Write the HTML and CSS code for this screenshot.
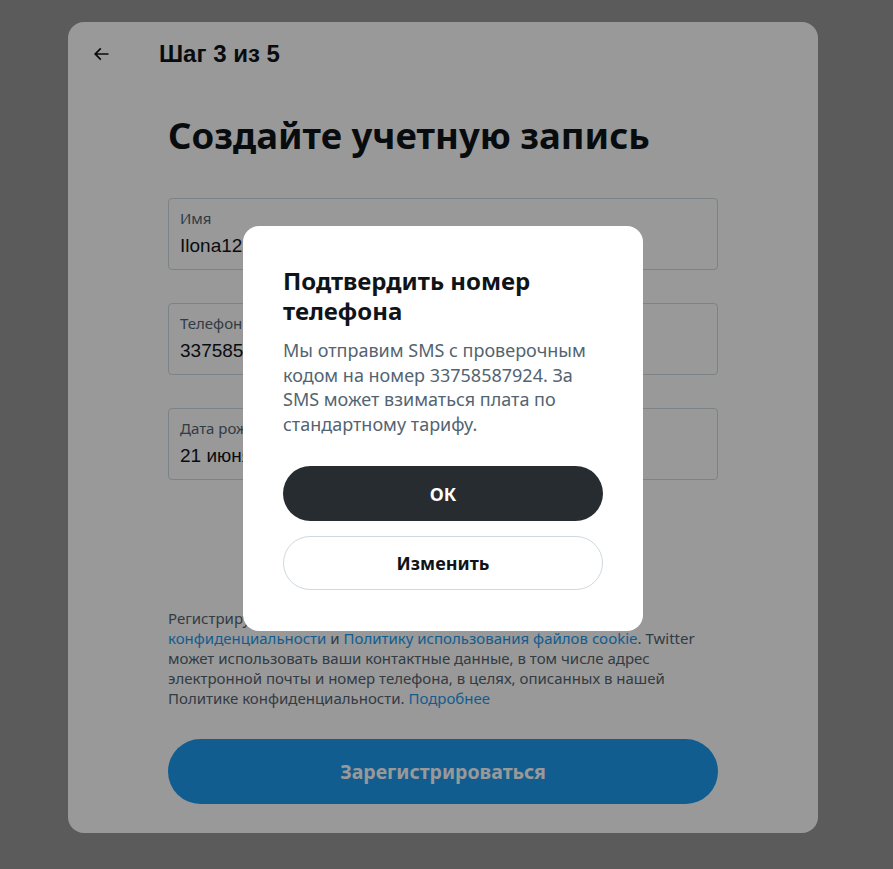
FILE: index.html
```html
<!DOCTYPE html>
<html lang="ru">
<head>
  <meta charset="UTF-8">
  <meta name="viewport" content="width=device-width, initial-scale=1.0">
  <title>Создайте учетную запись</title>
  <link rel="stylesheet" href="styles.css">
</head>
<body>
  <div class="page">
    <div class="card">
      <div class="card-head">
        <button class="back" aria-label="Назад">
          <svg viewBox="0 0 24 24" width="20" height="20"><path d="M7.414 13l5.043 5.04-1.414 1.42L3.586 12l7.457-7.46 1.414 1.42L7.414 11H21v2H7.414z"></path></svg>
        </button>
        <span class="step">Шаг 3 из 5</span>
      </div>

      <div class="card-body">
        <h1>Создайте учетную запись</h1>

        <div class="field">
          <span class="field-label">Имя</span>
          <span class="field-value">Ilona1234</span>
        </div>
        <div class="field">
          <span class="field-label">Телефон</span>
          <span class="field-value">33758587924</span>
        </div>
        <div class="field">
          <span class="field-label">Дата рождения</span>
          <span class="field-value">21 июня 1994 г.</span>
        </div>

        <p class="legal">
          Регистрируясь, вы принимаете <a href="#">Условия</a> и <a href="#">Политику</a><br>
          <a href="#">конфиденциальности</a> и <a href="#">Политику использования файлов cookie</a>. Twitter<br>
          может использовать ваши контактные данные, в том числе адрес<br>
          электронной почты и номер телефона, в целях, описанных в нашей<br>
          Политике конфиденциальности. <a href="#">Подробнее</a>
        </p>

        <button class="signup">Зарегистрироваться</button>
      </div>
    </div>
  </div>

  <div class="mask"></div>

  <div class="modal">
    <h2>Подтвердить номер телефона</h2>
    <p>Мы отправим SMS с проверочным кодом на номер 33758587924. За SMS может взиматься плата по стандартному тарифу.</p>
    <button class="btn btn-dark">ОК</button>
    <button class="btn btn-light">Изменить</button>
  </div>
</body>
</html>
```

FILE: styles.css
```css
body {
  margin: 0;
  background: #989898;
  font-family: "Noto Sans", "Open Sans", sans-serif;
  color: #0f1419;
}
.page {
  padding: 22px 0 36px 68px;
}
.card {
  width: 750px;
  height: 811px;
  background: #ffffff;
  border-radius: 16px;
  box-sizing: border-box;
}
.card-head {
  display: flex;
  align-items: center;
  height: 64px;
  padding: 0 16px;
}
.back {
  width: 34px;
  height: 34px;
  padding: 0;
  border: none;
  background: none;
  display: flex;
  align-items: center;
  justify-content: center;
}
.back svg { fill: #0f1419; }
.step {
  margin-left: 41px;
  font-family: "Liberation Sans", Arial, sans-serif;
  font-weight: bold;
  font-size: 24px;
}
.card-body {
  padding: 0 100px;
}
h1 {
  margin: 29px 0 43px;
  font-size: 36.5px;
  line-height: 40px;
  font-weight: bold;
}
.field {
  display: flex;
  flex-direction: column;
  gap: 7px;
  height: 72px;
  box-sizing: border-box;
  padding: 10px 11px;
  border: 1px solid #cfd9de;
  border-radius: 4px;
  margin-bottom: 33px;
}
.field-label {
  font-size: 15px;
  line-height: 18px;
  color: #536471;
}
.field-value {
  font-family: "Liberation Sans", Arial, sans-serif;
  font-size: 19px;
  line-height: 24px;
}
.legal {
  margin: 128px 0 31px;
  font-size: 15px;
  line-height: 20px;
  color: #536471;
}
.legal a {
  color: #1d9bf0;
  text-decoration: none;
}
.signup {
  display: block;
  width: 100%;
  height: 65px;
  border: none;
  border-radius: 33px;
  background: #1d9bf0;
  color: #ffffff;
  font-family: inherit;
  font-weight: bold;
  font-size: 19.5px;
}
.mask {
  position: fixed;
  inset: 0;
  background: rgba(0, 0, 0, 0.4);
}
.modal {
  position: absolute;
  left: 243px;
  top: 226px;
  width: 400px;
  box-sizing: border-box;
  padding: 40px 40px 41px;
  background: #ffffff;
  border-radius: 16px;
}
.modal h2 {
  margin: 0;
  font-size: 24px;
  line-height: 30px;
  font-weight: bold;
}
.modal p {
  margin: 12px 0 30px;
  font-size: 18px;
  line-height: 24.5px;
  color: #536471;
}
.btn {
  display: block;
  width: 100%;
  height: 55px;
  border-radius: 28px;
  font-family: inherit;
  font-weight: bold;
  font-size: 18px;
}
.btn-dark {
  border: none;
  background: #272c30;
  color: #ffffff;
  margin-bottom: 15px;
}
.btn-light {
  border: 1px solid #cfd9de;
  background: #ffffff;
  color: #0f1419;
  height: 54px;
}
```
